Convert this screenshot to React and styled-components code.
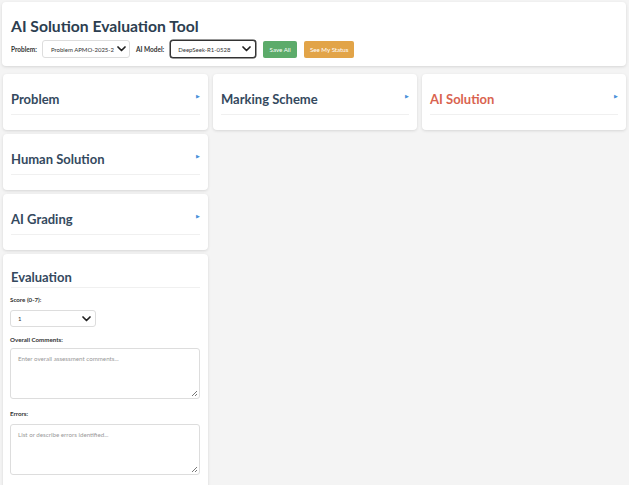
import React from "react";
import styled, { createGlobalStyle } from "styled-components";

const Global = createGlobalStyle`
  html, body { margin: 0; padding: 0; background: #f4f4f4; overflow: hidden; }
  body { font-family: Lato, "Open Sans", sans-serif; color: #2c3e50; }
  * { box-sizing: border-box; }
`;

const Page = styled.div`
  padding: 2px 3px 0 2px;
  display: flex;
  flex-direction: column;
  gap: 8px;
`;

const Header = styled.header`
  flex-shrink: 0;
  background: #fff;
  border-radius: 4px;
  box-shadow: 0 1px 3px rgba(0,0,0,0.12);
  padding: 13px 9px 0 9px;
  height: 64px;
`;

const Title = styled.h1`
  margin: 0 0 3px 0;
  font-size: 15.7px;
  font-weight: 700;
  line-height: 22px;
  color: #2c3e50;
`;

const Controls = styled.div`
  display: flex;
  align-items: center;
`;

const Label = styled.label`
  font-size: 6.5px;
  font-weight: 700;
  color: #333;
  margin-right: ${p => p.$mr || 0}px;
`;

const SelectBox = styled.div`
  position: relative;
  flex-shrink: 0;
  width: ${p => p.$w}px;
  height: ${p => p.$h || 18}px;
  border: 1px solid ${p => (p.$focus ? "#333" : "#ddd")};
  box-shadow: ${p => (p.$focus ? "0 0 0 0.5px #333" : "none")};
  border-radius: 3px;
  background: #fff;
  font-size: 6px;
  color: #333;
  display: flex;
  align-items: center;
  padding-left: ${p => p.$pl || 7}px;
  margin-right: ${p => p.$mr || 0}px;
`;

const Chevron = styled.svg`
  position: absolute;
  right: ${p => p.$r || 5}px;
  top: 50%;
  transform: translateY(-50%);
`;

const Button = styled.button`
  flex-shrink: 0;
  width: ${p => p.$w}px;
  height: 17px;
  border: none;
  border-radius: 2px;
  padding: 0;
  font-family: inherit;
  font-size: 6.2px;
  color: #fff;
  background: ${p => p.$bg};
  margin-right: ${p => p.$mr || 0}px;
`;

const Grid = styled.div`
  display: grid;
  grid-template-columns: 205px 204px 204px;
  column-gap: 5px;
  align-items: start;
  padding-left: 1px;
`;

const Column = styled.div`
  display: flex;
  flex-direction: column;
  gap: 4px;
`;

const Card = styled.section`
  flex-shrink: 0;
  background: #fff;
  border-radius: 4px;
  box-shadow: 0 1px 3px rgba(0,0,0,0.12);
  padding: 0 8px;
  height: ${p => (p.$h ? p.$h + "px" : "auto")};
`;

const CardHead = styled.div`
  display: flex;
  align-items: center;
  justify-content: space-between;
  height: ${p => p.$h}px;
  padding-top: ${p => p.$pt}px;
  border-bottom: 1px solid #f0f0f0;
`;

const CardTitle = styled.h2`
  margin: 0;
  font-size: 13px;
  font-weight: 700;
  color: ${p => p.$color || "#34495e"};
`;

const Arrow = styled.span`
  font-size: 5px;
  color: #4a90d9;
  margin-top: -6px;
`;

const EvalBody = styled.div`
  display: flex;
  flex-direction: column;
  padding: 8px 0 20px 0;
  margin-left: -1px;
`;

const FieldLabel = styled.div`
  font-size: 6.2px;
  font-weight: 700;
  line-height: 8px;
  color: #333;
  margin: ${p => p.$m || "0"};
`;

const TextArea = styled.div`
  position: relative;
  flex-shrink: 0;
  height: 51px;
  border: 1px solid #ddd;
  border-radius: 3px;
  padding: 6px 7px;
  font-size: 6.2px;
  color: #999;
`;

const Grip = styled.svg`
  position: absolute;
  right: 1px;
  bottom: 1px;
`;

const Down = ({ r }) => (
  <Chevron $r={r} width="9" height="6" viewBox="0 0 9 6">
    <path d="M1 1 L4.5 4.5 L8 1" stroke="#222" strokeWidth="1.7" fill="none" strokeLinecap="round" strokeLinejoin="round" />
  </Chevron>
);

const Resize = () => (
  <Grip width="7" height="7" viewBox="0 0 7 7">
    <path d="M6 1 L1 6 M6 4 L4 6" stroke="#555" strokeWidth="0.8" />
  </Grip>
);

const Panel = ({ title, color }) => (
  <Card $h={56}>
    <CardHead $h={41} $pt={9}>
      <CardTitle $color={color}>{title}</CardTitle>
      <Arrow>▶</Arrow>
    </CardHead>
  </Card>
);

export default function App() {
  return (
    <>
      <Global />
      <Page>
        <Header>
          <Title>AI Solution Evaluation Tool</Title>
          <Controls>
            <Label $mr={5}>Problem:</Label>
            <SelectBox $w={88} $pl={8} $mr={6}>
              Problem APMO-2025-2
              <Down r={3} />
            </SelectBox>
            <Label $mr={6}>AI Model:</Label>
            <SelectBox $w={86} $focus $mr={7}>
              DeepSeek-R1-0528
              <Down r={4} />
            </SelectBox>
            <Button $bg="#5cab6a" $w={34} $mr={7}>Save All</Button>
            <Button $bg="#e2a448" $w={50}>See My Status</Button>
          </Controls>
        </Header>
        <Grid>
          <Column>
            <Panel title="Problem" />
            <Panel title="Human Solution" />
            <Panel title="AI Grading" />
            <Card>
              <CardHead $h={34} $pt={12}>
                <CardTitle>Evaluation</CardTitle>
              </CardHead>
              <EvalBody>
                <FieldLabel>Score (0-7):</FieldLabel>
                <SelectBox $w={86} $h={17} style={{ marginTop: 6 }}>
                  1
                  <Down r={4} />
                </SelectBox>
                <FieldLabel $m="9px 0 4px">Overall Comments:</FieldLabel>
                <TextArea>
                  Enter overall assessment comments...
                  <Resize />
                </TextArea>
                <FieldLabel $m="11px 0 6px">Errors:</FieldLabel>
                <TextArea>
                  List or describe errors identified...
                  <Resize />
                </TextArea>
              </EvalBody>
            </Card>
          </Column>
          <Column>
            <Panel title="Marking Scheme" />
          </Column>
          <Column>
            <Panel title="AI Solution" color="#d9634f" />
          </Column>
        </Grid>
      </Page>
    </>
  );
}
